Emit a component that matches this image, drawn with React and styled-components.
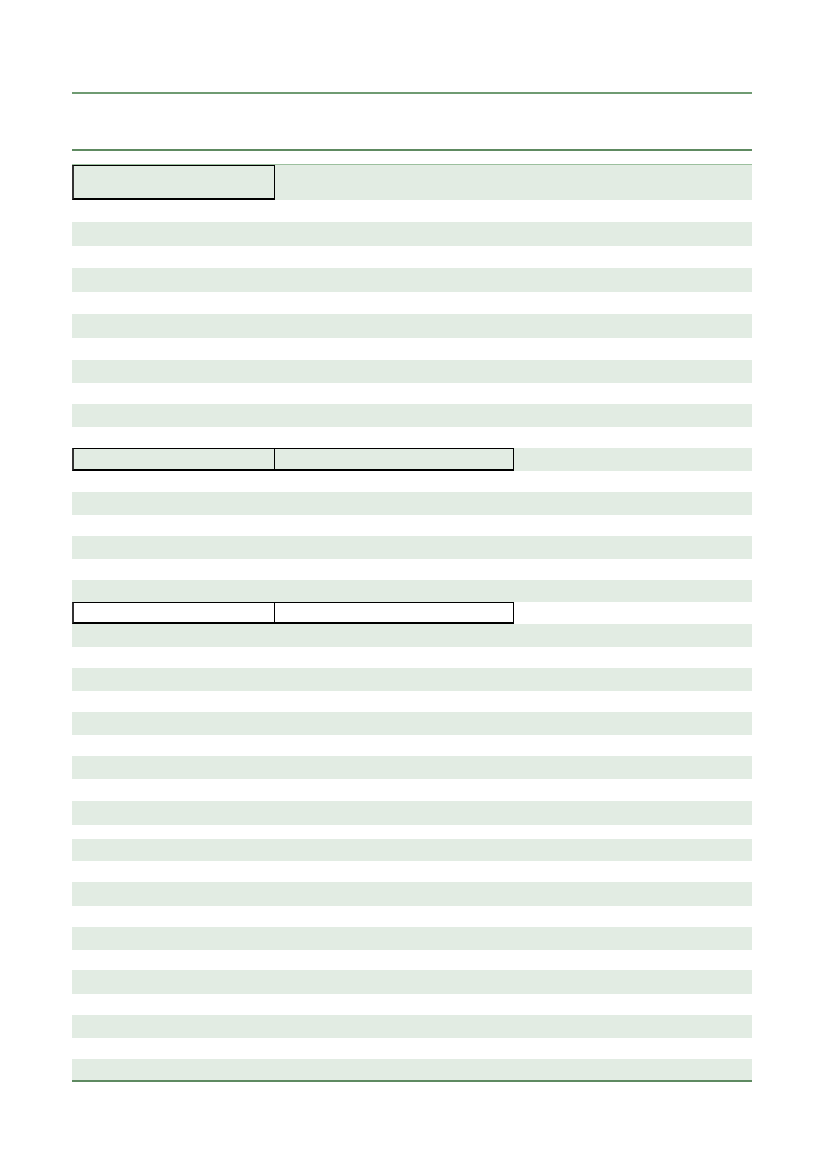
import React from 'react';
import styled, { createGlobalStyle } from 'styled-components';

const GlobalStyle = createGlobalStyle`
  html, body {
    margin: 0;
    padding: 0;
    background: #ffffff;
    font-family: "Liberation Sans", Arial, sans-serif;
  }
`;

const Colors = {
  stripe: '#e2ece3',
  rule: '#6f9b72',
  ruleDark: '#5e8a61',
  edge: '#9cc09e',
  ink: '#000000',
};

// rows of the form, top to bottom: height in px, shaded or not, boxed cells
const rows = [
  { h: 36, shade: true, cells: [203], first: true },
  { h: 22 }, { h: 24, shade: true },
  { h: 22 }, { h: 24, shade: true },
  { h: 22 }, { h: 24, shade: true },
  { h: 22 }, { h: 23, shade: true },
  { h: 21 }, { h: 23, shade: true },
  { h: 21 }, { h: 23, shade: true, cells: [203, 239] },
  { h: 21 }, { h: 23, shade: true },
  { h: 21 }, { h: 23, shade: true },
  { h: 21 }, { h: 22, shade: true },
  { h: 22, cells: [203, 239] }, { h: 23, shade: true },
  { h: 21 }, { h: 23, shade: true },
  { h: 21 }, { h: 23, shade: true },
  { h: 21 }, { h: 23, shade: true },
  { h: 22 }, { h: 24, shade: true },
  { h: 14 }, { h: 22, shade: true },
  { h: 21 }, { h: 24, shade: true },
  { h: 21 }, { h: 23, shade: true },
  { h: 20 }, { h: 24, shade: true },
  { h: 21 }, { h: 23, shade: true },
  { h: 21 }, { h: 21, shade: true },
];

const App = () => (
  <Page>
    <GlobalStyle />
    <Sheet>
      <Header>
        <Rule />
        <TitleSpace />
        <Rule $dark />
      </Header>
      <Form>
        {rows.map((row, i) => (
          <Row key={i} $h={row.h} $shade={row.shade} $first={row.first}>
            {row.cells && row.cells.map((w, j) => (
              <Cell key={j} $w={w} $lead={j === 0} />
            ))}
          </Row>
        ))}
      </Form>
      <Rule $dark />
    </Sheet>
  </Page>
);

const Page = styled.div`
  width: 826px;
  min-height: 1169px;
  background: #ffffff;
`;

const Sheet = styled.div`
  display: flex;
  flex-direction: column;
  width: 680px;
  margin-left: 72px;
  padding-top: 92px;
`;

const Header = styled.div`
  display: flex;
  flex-direction: column;
  margin-bottom: 13px;
`;

const Rule = styled.div`
  height: 2px;
  background: ${(p) => (p.$dark ? Colors.ruleDark : Colors.rule)};
`;

const TitleSpace = styled.div`
  height: 55px;
`;

const Form = styled.div`
  display: flex;
  flex-direction: column;
`;

const Row = styled.div`
  display: flex;
  height: ${(p) => p.$h}px;
  background: ${(p) => (p.$shade ? Colors.stripe : 'transparent')};
  border-top: ${(p) => (p.$first ? `1px solid ${Colors.edge}` : 'none')};
  box-sizing: border-box;
`;

const Cell = styled.div`
  flex: 0 0 auto;
  width: ${(p) => p.$w}px;
  height: 100%;
  box-sizing: border-box;
  border: 1px solid ${Colors.ink};
  border-left: ${(p) => (p.$lead ? `2px solid #333` : 'none')};
  border-bottom-width: 2px;
`;

export default App;
